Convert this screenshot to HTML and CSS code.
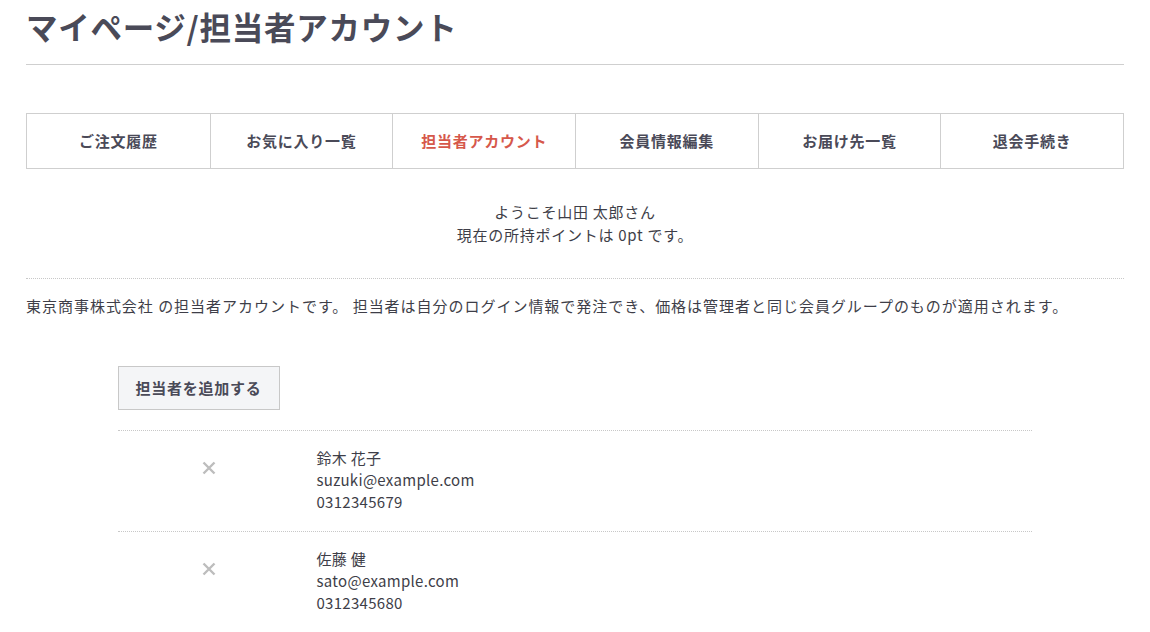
FILE: index.html
```html
<!DOCTYPE html>
<html lang="ja">
<head>
  <meta charset="UTF-8" />
  <meta name="viewport" content="width=device-width, initial-scale=1.0" />
  <title>マイページ/担当者アカウント</title>
  <link rel="stylesheet" href="styles.css">
</head>
<body>
  <div class="page">
    <h1 class="page-title">マイページ/担当者アカウント</h1>

    <ul class="mypage-nav">
      <li><a href="#">ご注文履歴</a></li>
      <li><a href="#">お気に入り一覧</a></li>
      <li class="active"><a href="#">担当者アカウント</a></li>
      <li><a href="#">会員情報編集</a></li>
      <li><a href="#">お届け先一覧</a></li>
      <li><a href="#">退会手続き</a></li>
    </ul>

    <div class="welcome">
      <p>ようこそ山田 太郎さん</p>
      <p>現在の所持ポイントは 0pt です。</p>
    </div>

    <p class="lead">東京商事株式会社 の担当者アカウントです。 担当者は自分のログイン情報で発注でき、価格は管理者と同じ会員グループのものが適用されます。</p>

    <div class="staff">
      <button class="btn-add" type="button">担当者を追加する</button>

      <ul class="staff-list">
        <li class="staff-item">
          <div class="staff-remove">
            <a href="#" title="削除">
              <svg width="14" height="14" viewBox="0 0 14 14"><path d="M1.5 1.5 L12.5 12.5 M12.5 1.5 L1.5 12.5" stroke="#bdbdbd" stroke-width="2.4" fill="none"/></svg>
            </a>
          </div>
          <div class="staff-info">
            <p>鈴木 花子</p>
            <p>suzuki@example.com</p>
            <p>0312345679</p>
          </div>
        </li>
        <li class="staff-item">
          <div class="staff-remove">
            <a href="#" title="削除">
              <svg width="14" height="14" viewBox="0 0 14 14"><path d="M1.5 1.5 L12.5 12.5 M12.5 1.5 L1.5 12.5" stroke="#bdbdbd" stroke-width="2.4" fill="none"/></svg>
            </a>
          </div>
          <div class="staff-info">
            <p>佐藤 健</p>
            <p>sato@example.com</p>
            <p>0312345680</p>
          </div>
        </li>
      </ul>
    </div>
  </div>
</body>
</html>
```

FILE: styles.css
```css
body { margin: 0; font-family: "Noto Sans CJK JP", "Noto Sans", sans-serif; color: #3e3e48; font-size: 15px; letter-spacing: .05em; background: #fff; }
p { margin: 0; }
a { color: inherit; text-decoration: none; }
.page { padding: 0 26px; }

.page-title { margin: 0; padding: 4px 0 15px; font-size: 31.5px; line-height: 45px; font-weight: 700; color: #4a4a58; border-bottom: 1px solid #cfcfcf; }

.mypage-nav { list-style: none; margin: 48px 0 0; padding: 0; display: grid; grid-template-columns: repeat(6, 1fr); border: 1px solid #cfcfcf; }
.mypage-nav li { border-left: 1px solid #cfcfcf; text-align: center; }
.mypage-nav li:first-child { border-left: none; }
.mypage-nav a { display: block; line-height: 54px; font-weight: 700; color: #4a4a58; }
.mypage-nav .active a { color: #d6584b; }

.welcome { text-align: center; line-height: 23px; padding: 31px 0 32px; border-bottom: 1px dotted #c8c8c8; }

.lead { margin-top: 15px; line-height: 24px; letter-spacing: .065em; }

.staff { width: 83.333%; margin: 48px auto 0; }
.btn-add { font-family: inherit; font-size: 15px; letter-spacing: .05em; font-weight: 700; color: #4a4a58; background: #f4f5f7; border: 1px solid #c8c8c8; padding: 9px 17px; line-height: 24px; cursor: pointer; }

.staff-list { list-style: none; margin: 20px 0 0; padding: 0; border-top: 1px dotted #c8c8c8; }
.staff-item { display: flex; border-bottom: 1px dotted #c8c8c8; padding: 16px 0 18px; }
.staff-remove { width: 20%; text-align: center; padding-top: 14px; }
.staff-remove svg { display: inline-block; vertical-align: top; }
.staff-info { flex: 1; padding-left: 16px; line-height: 22px; letter-spacing: .02em; }
```
